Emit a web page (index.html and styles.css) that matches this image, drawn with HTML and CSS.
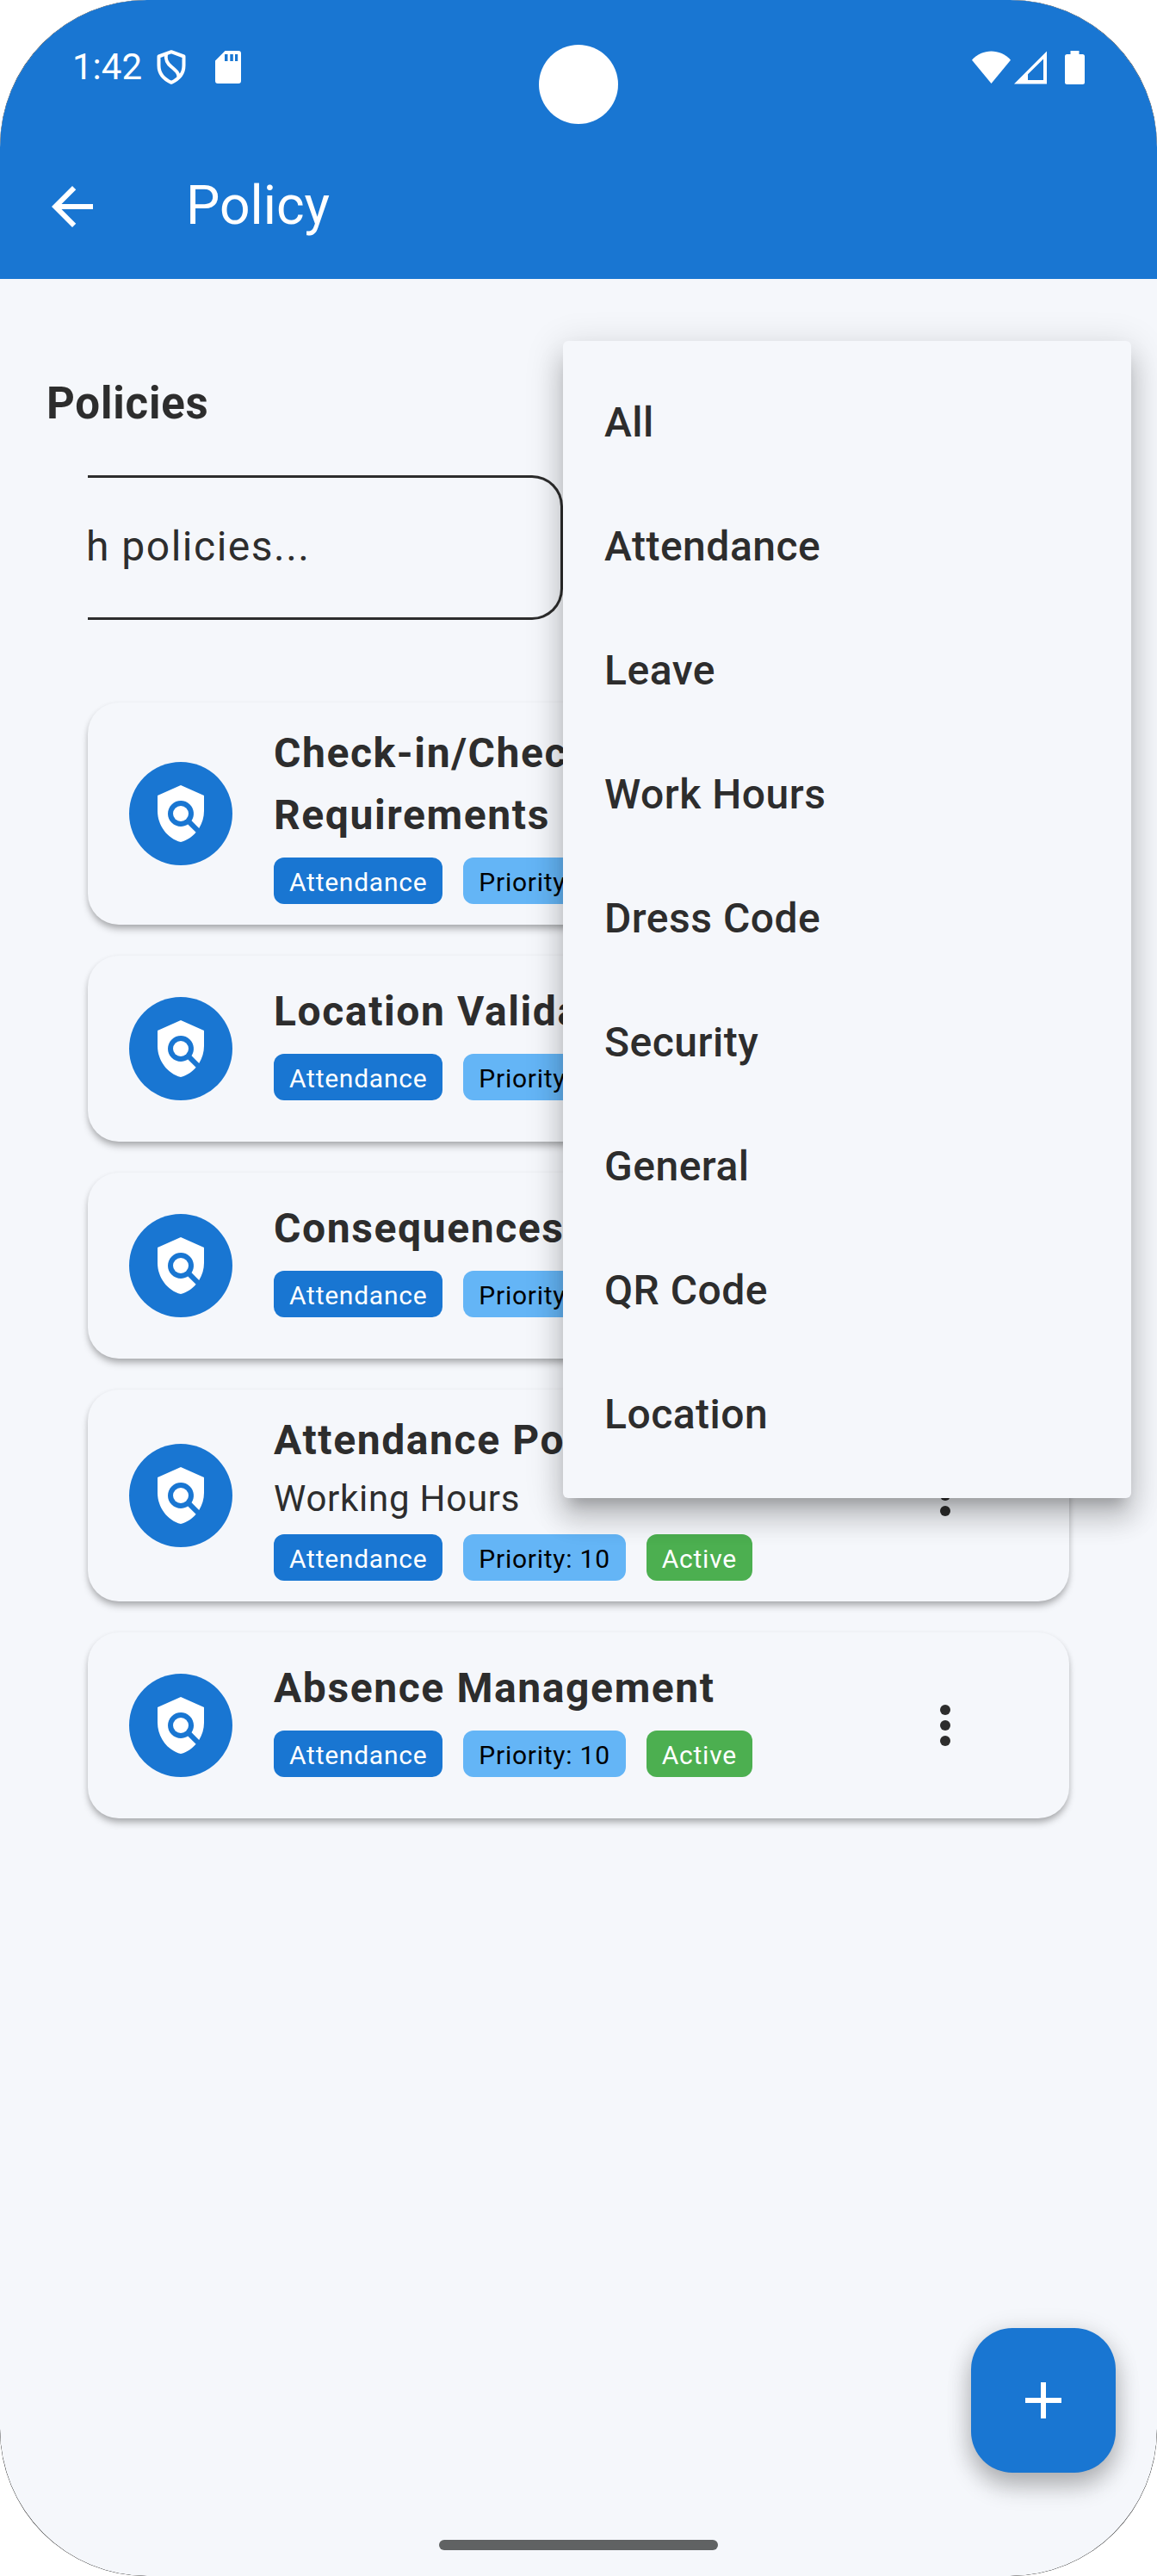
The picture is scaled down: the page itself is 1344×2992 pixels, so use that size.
FILE: index.html
```
<!DOCTYPE html>
<html lang="en">
<head>
<meta charset="utf-8">
<title>Policy</title>
<link rel="stylesheet" href="styles.css">
</head>
<body>
<svg class="defs" width="0" height="0" aria-hidden="true">
  <symbol id="policy" viewBox="0 0 24 24">
    <path d="M21 5l-9-4-9 4v6c0 5.55 3.84 10.74 9 12 2.3-.56 4.33-1.9 5.88-3.71l-3.12-3.12c-1.94 1.29-4.58 1.07-6.29-.64-1.95-1.95-1.95-5.12 0-7.07 1.95-1.95 5.12-1.95 7.07 0 1.71 1.71 1.92 4.35.64 6.29l2.9 2.9C20.29 15.69 21 13.38 21 11V5z"/>
    <circle cx="12" cy="12" r="3"/>
  </symbol>
  <symbol id="more" viewBox="0 0 24 24">
    <circle cx="12" cy="6" r="2"/><circle cx="12" cy="12" r="2"/><circle cx="12" cy="18" r="2"/>
  </symbol>
</svg>
<div class="device">
<div class="screen">
  <header class="header">
    <div class="status">
      <div class="status-left">
        <span class="clock">1:42</span>
        <svg class="vpn" width="34" height="40" viewBox="0 0 34 40" fill="none" stroke="#fff" stroke-width="4" stroke-linejoin="round">
          <path d="M17 2.200 31.500 7.500V18C31.500 27 25.500 34 17 37.800 8.500 34 2.500 27 2.500 18V7.500Z"/>
          <path d="M11 4.500C10 11 11.500 15 17 19.500 22.500 24 26 27 25.500 32"/>
        </svg>
        <svg class="sd" width="30" height="38" viewBox="0 0 30 38">
          <path fill="#fff" fill-rule="evenodd" d="M11.500 0H27a3 3 0 0 1 3 3V35a3 3 0 0 1-3 3H3a3 3 0 0 1-3-3V11.500ZM11 4V12H14.500V4ZM17.300 4V12H20.800V4ZM23 4V12H26.200V4Z"/>
        </svg>
      </div>
      <div class="status-right">
        <svg width="45" height="39" viewBox="0 0 45 39" fill="#fff"><path d="M0 10.700C12-3 33-3 45 10.700L22.500 38Z"/></svg>
        <svg class="signal" width="38" height="39" viewBox="0 0 38 39" fill="#fff" fill-rule="evenodd"><path d="M38 .5V38.500H0ZM34 9.500 16 27.300V34H34Z"/></svg>
        <svg class="battery" width="23" height="39" viewBox="0 0 23 39" fill="#fff"><path d="M6.500 0H16.500V4H20.500A2.500 2.500 0 0 1 23 6.500V36.500A2.500 2.500 0 0 1 20.500 39H2.500A2.500 2.500 0 0 1 0 36.500V6.500A2.500 2.500 0 0 1 2.500 4H6.500Z"/></svg>
      </div>
    </div>
    <div class="appbar">
      <svg class="back" width="72" height="72" viewBox="0 0 24 24" fill="#fff"><path d="M20 11H7.830l5.590-5.590L12 4l-8 8 8 8 1.410-1.410L7.830 13H20v-2z"/></svg>
      <h1>Policy</h1>
    </div>
  </header>
  <main class="content">
    <h2>Policies</h2>
    <div class="panel">
      <div class="search">h policies...</div>
      <ul class="cards">
        <li class="card">
          <span class="avatar"><svg><use href="#policy"/></svg></span>
          <div class="info">
            <h3>Check-in/Check-out Requirements</h3>
            <div class="chips"><span class="chip blue">Attendance</span><span class="chip light">Priority: 10</span></div>
          </div>
        </li>
        <li class="card short">
          <span class="avatar"><svg><use href="#policy"/></svg></span>
          <div class="info">
            <h3>Location Validation</h3>
            <div class="chips"><span class="chip blue">Attendance</span><span class="chip light">Priority: 10</span></div>
          </div>
        </li>
        <li class="card short">
          <span class="avatar"><svg><use href="#policy"/></svg></span>
          <div class="info">
            <h3>Consequences</h3>
            <div class="chips"><span class="chip blue">Attendance</span><span class="chip light">Priority: 10</span></div>
          </div>
        </li>
        <li class="card">
          <span class="avatar"><svg><use href="#policy"/></svg></span>
          <div class="info">
            <h3>Attendance Policy</h3>
            <p>Working Hours</p>
            <div class="chips"><span class="chip blue">Attendance</span><span class="chip light">Priority: 10</span><span class="chip green">Active</span></div>
          </div>
          <svg class="more"><use href="#more"/></svg>
        </li>
        <li class="card short">
          <span class="avatar"><svg><use href="#policy"/></svg></span>
          <div class="info">
            <h3>Absence Management</h3>
            <div class="chips"><span class="chip blue">Attendance</span><span class="chip light">Priority: 10</span><span class="chip green">Active</span></div>
          </div>
          <svg class="more"><use href="#more"/></svg>
        </li>
      </ul>
    </div>
  </main>
  <ul class="menu">
    <li>All</li><li>Attendance</li><li>Leave</li><li>Work Hours</li><li>Dress Code</li><li>Security</li><li>General</li><li>QR Code</li><li>Location</li>
  </ul>
  <span class="camera"></span>
  <button class="fab" aria-label="Add policy"><svg width="72" height="72" viewBox="0 0 24 24" fill="#fff"><path d="M19 13h-6v6h-2v-6H5v-2h6V5h2v6h6v2z"/></svg></button>
  <span class="handle"></span>
</div>
</div>
</body>
</html>
```
FILE: styles.css
```
* { box-sizing: border-box; }
body {
  margin: 0;
  background: #fff;
  font-family: Roboto, "Noto Sans", sans-serif;
  color: #2d2d2d;
}
h1, h2, h3, p, ul { margin: 0; padding: 0; }
ul { list-style: none; }
svg { display: block; flex: none; }
.defs { position: absolute; }

.device {
  width: 1344px;
  height: 2992px;
  border-radius: 170px;
  overflow: hidden;
  background: #111;
}
.screen {
  position: relative;
  height: 2992px;
  border-radius: 171px;
  overflow: hidden;
  background: #f5f7fb;
}

.header { height: 324px; background: #1976d2; color: #fff; }
.status {
  height: 156px;
  padding: 0 84px;
  display: flex;
  justify-content: space-between;
  align-items: center;
}
.status-left, .status-right { display: flex; align-items: center; }
.clock { font-size: 42px; line-height: 48px; }
.vpn { margin-left: 17px; }
.sd { margin-left: 34px; }
.signal { margin-left: 4px; }
.battery { margin-left: 21px; }
.appbar { height: 168px; padding-left: 48px; display: flex; align-items: center; gap: 96px; }
.appbar h1 { font-size: 62.4px; font-weight: 400; line-height: 84px; padding-bottom: 3px; }

.content { padding: 109px 102px 0; }
.content h2 {
  margin-left: -48px;
  font-size: 51px;
  font-weight: 700;
  line-height: 72px;
  letter-spacing: .8px;
}
.panel { padding-top: 47px; }
.search {
  width: 552px;
  height: 168px;
  border: 3px solid #2d2d2d;
  border-left: 0;
  border-radius: 0 36px 36px 0;
  font-size: 48px;
  line-height: 159px;
  letter-spacing: 1.5px;
  text-indent: -2px;
}
.cards { margin-top: 96px; display: flex; flex-direction: column; gap: 36px; }
.card {
  padding: 24px 108px 24px 48px;
  border-radius: 36px;
  background: #f5f7fb;
  box-shadow: 0 6px 9px -1px rgba(0, 0, 0, .27), 0 2px 6px rgba(0, 0, 0, .08);
  display: flex;
  align-items: center;
  gap: 48px;
}
.card.short { height: 216px; }
.short .info { margin-top: -18px; }
.avatar {
  flex: none;
  width: 120px;
  height: 120px;
  border-radius: 50%;
  background: #1976d2;
  display: grid;
  place-items: center;
}
.avatar svg { width: 72px; height: 72px; fill: #fff; }
.info { flex: 1; }
.card h3 {
  max-width: 560px;
  position: relative;
  top: -1px;
  font-size: 48px;
  font-weight: 700;
  line-height: 72px;
  letter-spacing: 1.6px;
}
.card p { font-size: 42px; line-height: 62px; margin-bottom: -2px; letter-spacing: .75px; }
.chips { margin-top: 12px; display: flex; gap: 24px; }
.chip {
  height: 54px;
  padding: 0 18px;
  border-radius: 12px;
  font-size: 30px;
  line-height: 57px;
  letter-spacing: .75px;
  white-space: nowrap;
}
.blue { background: #1976d2; color: #fff; }
.light { background: #64b5f6; color: #000; }
.green { background: #4caf50; color: #fff; }
.more { width: 72px; height: 72px; fill: #2d2d2d; }

.menu {
  position: absolute;
  left: 654px;
  top: 396px;
  width: 660px;
  height: 1344px;
  padding: 24px 48px;
  border-radius: 6px;
  background: #f5f7fb;
  box-shadow: 0 15px 15px -9px rgba(0, 0, 0, .2), 0 24px 30px 3px rgba(0, 0, 0, .14), 0 9px 42px 6px rgba(0, 0, 0, .12);
}
.menu li { height: 144px; font-size: 48px; font-weight: 500; line-height: 141px; letter-spacing: .5px; }
.camera {
  position: absolute;
  left: 626px;
  top: 52px;
  width: 92px;
  height: 92px;
  border-radius: 50%;
  background: #fff;
}
.fab {
  position: absolute;
  right: 48px;
  bottom: 120px;
  width: 168px;
  height: 168px;
  padding: 0;
  border: 0;
  border-radius: 48px;
  background: #1976d2;
  box-shadow: 0 16px 28px rgba(0, 0, 0, .24), 0 4px 30px rgba(0, 0, 0, .12);
  display: grid;
  place-items: center;
}
.handle {
  position: absolute;
  left: 510px;
  bottom: 30px;
  width: 324px;
  height: 12px;
  border-radius: 6px;
  background: #606263;
}
```
